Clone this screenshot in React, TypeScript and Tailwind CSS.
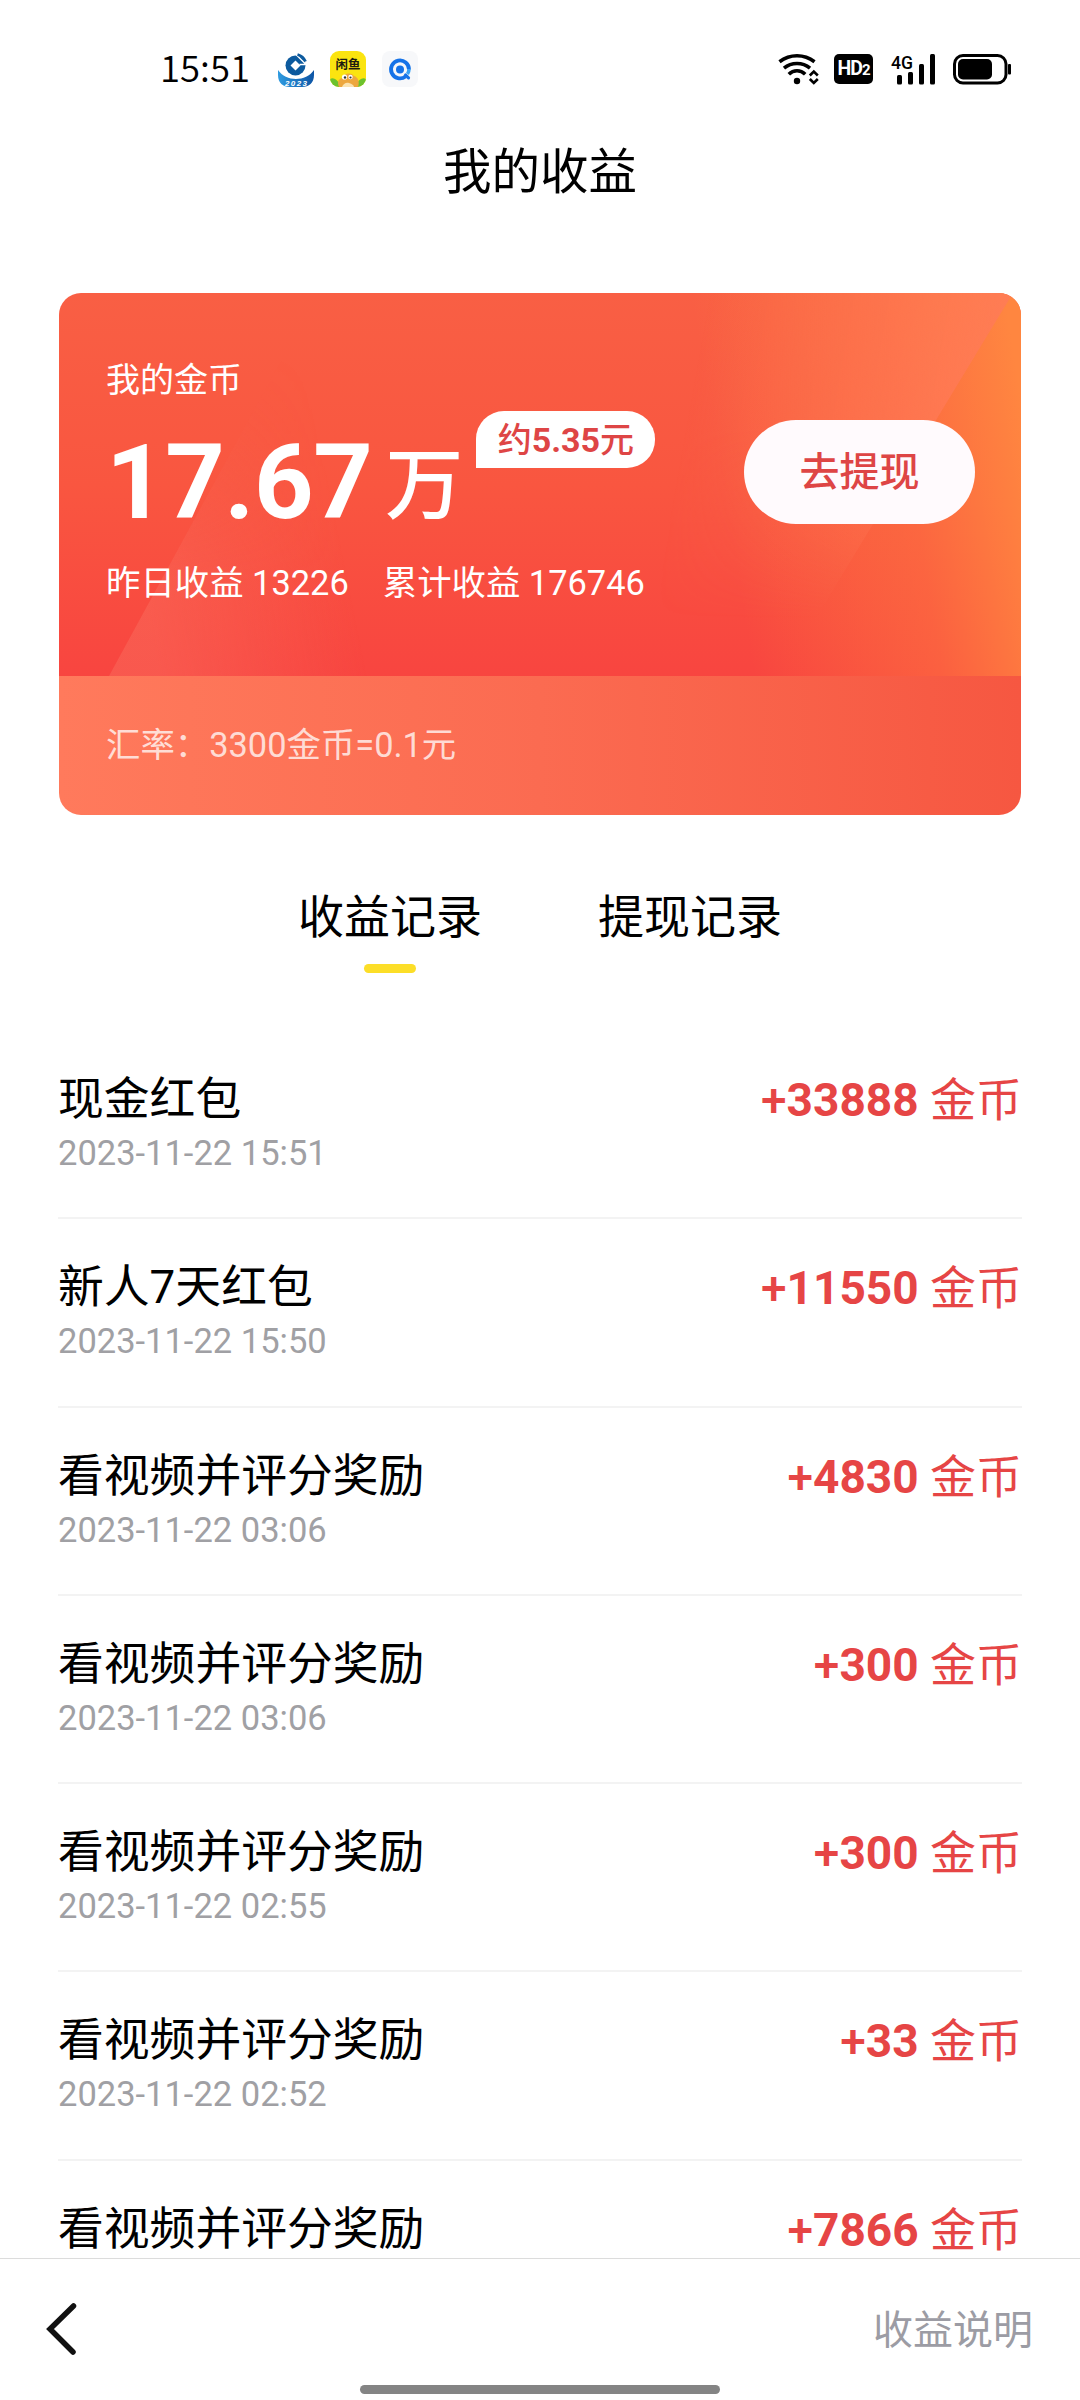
type EarningRecord = {
  title: string
  time?: string
  amount: string
}

const RECORDS: EarningRecord[] = [
  { title: '现金红包', time: '2023-11-22 15:51', amount: '33888' },
  { title: '新人7天红包', time: '2023-11-22 15:50', amount: '11550' },
  { title: '看视频并评分奖励', time: '2023-11-22 03:06', amount: '4830' },
  { title: '看视频并评分奖励', time: '2023-11-22 03:06', amount: '300' },
  { title: '看视频并评分奖励', time: '2023-11-22 02:55', amount: '300' },
  { title: '看视频并评分奖励', time: '2023-11-22 02:52', amount: '33' },
  { title: '看视频并评分奖励', amount: '7866' },
]

/** Blue bank badge with the year ribbon under it. */
function BankIcon() {
  return (
    <svg width="36" height="36" viewBox="0 0 36 36" aria-hidden="true">
      <defs>
        <linearGradient id="ribbon" x1="0" y1="0" x2="1" y2="0">
          <stop offset="0" stopColor="#2f9be0" />
          <stop offset="1" stopColor="#0d55a5" />
        </linearGradient>
      </defs>
      <path
        d="M0 19C4 25 11 28 18 28S32 25 36 19V24C36 32 31 36 24 36H12C5 36 0 32 0 24Z"
        fill="url(#ribbon)"
      />
      <circle cx="17.500" cy="14.500" r="10" fill="#0c5a9e" />
      <path d="M17.500 9.500l5 5-5 5-5-5z" fill="#fff" />
      <path d="M18 3.500L28.500 14M21.500 13.500H29" fill="none" stroke="#fff" strokeWidth="1.400" />
      <path d="M19.500 3.500C23 4.500 26 7 27.500 10.500" fill="none" stroke="#0c5a9e" strokeWidth="2.800" />
      <text x="18" y="34.500" textAnchor="middle" fontSize="8" fontWeight="700" fontStyle="italic" fill="#fff" textLength="22" fontFamily="Liberation Sans, sans-serif">
        2023
      </text>
    </svg>
  )
}

/** Yellow second-hand market app icon. */
function XianyuIcon() {
  return (
    <svg width="36" height="36" viewBox="0 0 36 36" aria-hidden="true">
      <defs>
        <clipPath id="xyClip">
          <rect width="36" height="36" rx="9" />
        </clipPath>
      </defs>
      <g clipPath="url(#xyClip)">
        <rect width="36" height="36" fill="#fbe410" />
        <path d="M0 28c4-2 7 1 9 4l1 4H0zM36 28c-4-2-7 1-9 4l-1 4h10z" fill="#6cc22e" />
        <path d="M9 36c-2-4-1-8 3-9 2-5 9-6 12-2 4 1 6 6 4 11z" fill="#eda73e" />
        <path d="M12 36c1-3 4-5 7-4s5 2 5 4z" fill="#fbe3b0" />
        <circle cx="14.500" cy="26" r="2.600" fill="#fff" />
        <circle cx="20.500" cy="26" r="2.200" fill="#fff" />
        <circle cx="15" cy="26.500" r="1.200" fill="#333" />
        <circle cx="20.500" cy="26.500" r="1.100" fill="#333" />
      </g>
      <text x="18" y="17.500" textAnchor="middle" fontSize="12.500" fontWeight="700" fill="#1c1c10" fontFamily="'Noto Sans CJK SC', sans-serif">
        闲鱼
      </text>
    </svg>
  )
}

function BrowserIcon() {
  return (
    <svg width="36" height="36" viewBox="0 0 36 36" aria-hidden="true">
      <rect width="36" height="36" rx="8" fill="#f7f8fa" />
      <path d="M23.500 25.500A9 9 0 1 1 27 18.500" fill="none" stroke="#1673e8" strokeWidth="3.800" />
      <path d="M27 18c0 2-.5 3.500-1.500 5" fill="none" stroke="#38a2f5" strokeWidth="3.500" />
      <path d="M23.500 24l3 2.800" stroke="#1673e8" strokeWidth="3.200" strokeLinecap="round" />
      <circle cx="18" cy="18.500" r="4" fill="#1673e8" />
    </svg>
  )
}

function WifiIcon() {
  return (
    <svg width="41" height="32" viewBox="0 0 41 32" aria-hidden="true">
      <g fill="none" stroke="#000" strokeWidth="3.600">
        <path d="M1.500 8.800C12 .8 26 .8 36.500 8.800" />
        <path d="M6 15.200C13.500 9 24.500 9 32 15.200" />
        <path d="M10.800 21.200C15.500 16.600 22.500 16.600 27.200 21.200" />
      </g>
      <circle cx="19" cy="28" r="3.200" fill="#000" />
      <path d="M31.800 22.500l4-4 4 4M31.800 26l4 4 4-4" fill="none" stroke="#000" strokeWidth="2.600" />
    </svg>
  )
}

function SignalIcon() {
  return (
    <svg className="overflow-visible" width="46" height="32" viewBox="0 0 46 32" aria-hidden="true">
      <text x="0" y="15.500" fontSize="19" fontWeight="500" textLength="22" lengthAdjust="spacingAndGlyphs" fontFamily="Roboto, sans-serif">
        4G
      </text>
      <g fill="#000">
        <rect x="6" y="22" width="5" height="9.500" rx="1.500" />
        <rect x="17" y="19" width="5" height="12.500" rx="1.500" />
        <rect x="28" y="11" width="5" height="20.500" rx="1.500" />
        <rect x="39" y="1" width="5" height="30.500" rx="1.500" />
      </g>
    </svg>
  )
}

function BatteryIcon() {
  return (
    <svg width="59" height="32" viewBox="0 0 59 32" aria-hidden="true">
      <rect x="1.500" y="2.500" width="51.500" height="27.500" rx="8.500" fill="none" stroke="#000" strokeWidth="3" />
      <rect x="5" y="6" width="34" height="20.500" rx="5" fill="#000" />
      <rect x="55" y="11" width="3" height="10.500" rx="1" fill="#000" />
    </svg>
  )
}

function StatusBar() {
  return (
    <div className="flex h-[138px] items-start justify-between pt-[51px] pr-[68px] pl-[160px]">
      <div className="flex h-9 items-center">
        <span className="w-[118px] pb-[5px] font-['Noto_Sans_CJK_SC',sans-serif] text-[36.5px] leading-9 font-[350]">
          15:51
        </span>
        <div className="flex gap-4">
          <BankIcon />
          <XianyuIcon />
          <BrowserIcon />
        </div>
      </div>
      <div className="flex h-9 items-center">
        <WifiIcon />
        <span className="ml-[15px] flex h-[30px] w-[39px] items-baseline justify-center rounded-[5px] bg-black text-[19.5px] leading-[30px] font-bold tracking-[-1px] text-white">
          HD<span className="text-[15px]">2</span>
        </span>
        <span className="ml-[18px]">
          <SignalIcon />
        </span>
        <span className="ml-[16px]">
          <BatteryIcon />
        </span>
      </div>
    </div>
  )
}

/** Red to orange sheen with two slanted facets behind the balance. */
function CardBackdrop() {
  return (
    <svg className="absolute inset-0" width="962" height="383" viewBox="0 0 962 383" aria-hidden="true">
      <defs>
        <linearGradient id="base" x1="0" y1="0" x2="0" y2="1">
          <stop offset="0" stopColor="#f95f44" />
          <stop offset="0.500" stopColor="#f95640" />
          <stop offset="1" stopColor="#f84540" />
        </linearGradient>
        <linearGradient id="glow" gradientUnits="userSpaceOnUse" x1="670" y1="230" x2="975" y2="180">
          <stop offset="0" stopColor="#ff8b3d" stopOpacity="0" />
          <stop offset="0.600" stopColor="#ff8040" stopOpacity="0.450" />
          <stop offset="1" stopColor="#ff8640" />
        </linearGradient>
        <linearGradient id="facetRight" gradientUnits="userSpaceOnUse" x1="640" y1="60" x2="920" y2="110">
          <stop offset="0" stopColor="#ff7a58" stopOpacity="0" />
          <stop offset="1" stopColor="#ff7a58" stopOpacity="0.800" />
        </linearGradient>
        <linearGradient id="facetFade" gradientUnits="userSpaceOnUse" x1="0" y1="0" x2="0" y2="383">
          <stop offset="0" stopColor="#fff" />
          <stop offset="0.350" stopColor="#fff" />
          <stop offset="0.850" stopColor="#000" />
        </linearGradient>
        <mask id="facetMask">
          <rect width="962" height="383" fill="url(#facetFade)" />
        </mask>
        <linearGradient id="facetLeft" gradientUnits="userSpaceOnUse" x1="90" y1="330" x2="290" y2="290">
          <stop offset="0" stopColor="#fa7060" stopOpacity="0.450" />
          <stop offset="1" stopColor="#fa7060" stopOpacity="0" />
        </linearGradient>
        <linearGradient id="facetRise" gradientUnits="userSpaceOnUse" x1="0" y1="60" x2="0" y2="383">
          <stop offset="0" stopColor="#000" />
          <stop offset="0.700" stopColor="#fff" />
        </linearGradient>
        <mask id="riseMask">
          <rect width="962" height="383" fill="url(#facetRise)" />
        </mask>
      </defs>
      <rect width="962" height="383" fill="url(#base)" />
      <rect width="962" height="383" fill="url(#glow)" />
      <path d="M500 0H954L722 383H500Z" fill="url(#facetRight)" mask="url(#facetMask)" />
      <path d="M50 383L226 60H320V383Z" fill="url(#facetLeft)" mask="url(#riseMask)" />
    </svg>
  )
}

function BalanceCard() {
  return (
    <section className="mx-[59px] mt-[85px] h-[522px] overflow-hidden rounded-[22px] text-white">
      <div className="relative h-[383px]">
        <CardBackdrop />
        <div className="relative flex h-full items-start justify-between pr-[46px] pl-[47px]">
          <div className="pt-[67px]">
            <p className="h-10 text-[34px] leading-10">我的金币</p>
            <div className="flex h-[120px] items-start">
              <span className="mt-[23px] text-[104px] leading-[120px] font-bold tracking-[-0.5px]">17.67</span>
              <span className="mt-[27px] ml-[13px] text-[78px] leading-[120px] font-medium">万</span>
              <span className="mt-[11px] ml-[13px] flex h-[57px] w-[179px] items-center justify-center rounded-[28px] rounded-bl-none bg-white pt-[2px] text-[34px] font-medium text-[#de4545]">
                约<b className="font-bold">5.35</b>元
              </span>
            </div>
            <p className="mt-[43px] flex gap-[34px] text-[34.4px] leading-10">
              <span>昨日收益 13226</span>
              <span>累计收益 176746</span>
            </p>
          </div>
          <button
            type="button"
            className="mt-[127px] h-[104px] w-[231px] rounded-full bg-[#fffafd] pt-[2px] text-[40px] font-medium text-[#de4545]"
          >
            去提现
          </button>
        </div>
      </div>
      <div className="flex h-[139px] items-center bg-linear-to-r from-[#ff7a5c] via-[#fb6b51] to-[#f65741] px-[47px] text-[34.4px] text-white/75">
        汇率：3300金币=0.1元
      </div>
    </section>
  )
}

function RecordRow({ record }: { record: EarningRecord }) {
  return (
    <li className="h-[188.25px] shrink-0 border-b-2 border-[#f3f3f3] pt-[38px]">
      <div className="flex h-[63px] items-center justify-between text-[46px]">
        <span className="text-[45.8px]">{record.title}</span>
        <span className="text-[#e64545]">
          <b className="font-bold">
            <span className="font-medium">+</span>
            {record.amount}
          </b>{' '}
          金币
        </span>
      </div>
      {record.time && <p className="text-[34.5px] leading-[42px] text-[#a0a0a4]">{record.time}</p>}
    </li>
  )
}

function App() {
  return (
    <div className="flex h-[2400px] w-[1080px] flex-col overflow-hidden bg-white font-[Roboto,'Noto_Sans_CJK_SC',sans-serif] text-black">
      <StatusBar />
      <h1 className="h-[70px] text-center text-[48.5px] leading-[69px]">我的收益</h1>
      <BalanceCard />

      <nav className="mt-[72px] flex justify-center gap-[116px] text-[46px] leading-[60px]">
        <button type="button" className="flex h-[86px] flex-col items-center justify-between">
          收益记录
          <span className="h-[9px] w-[52px] rounded-full bg-[#fcde28]" />
        </button>
        <button type="button" className="flex h-[60px] items-center">
          提现记录
        </button>
      </nav>

      <ul className="mx-[58px] mt-[58px] flex min-h-0 flex-1 flex-col overflow-hidden">
        {RECORDS.map((record, i) => (
          <RecordRow key={i} record={record} />
        ))}
      </ul>

      <footer className="flex h-[142px] shrink-0 flex-col justify-between border-t border-[#dcdcdc] bg-white pb-[6px]">
        <div className="flex h-[126px] items-start justify-between pr-[47px] pl-[46px]">
          <button type="button" aria-label="返回" className="mt-[43px]">
            <svg width="32" height="54" viewBox="0 0 32 54" fill="none" aria-hidden="true">
              <path d="M27.500 4L4 27L27 50" stroke="#111" strokeWidth="5.500" strokeLinecap="round" />
            </svg>
          </button>
          <button type="button" className="mt-[42px] text-[40px] leading-[60px] text-[#9c9ca4]">
            收益说明
          </button>
        </div>
        <span className="h-[9px] w-[360px] shrink-0 self-center rounded-full bg-[#848484]" />
      </footer>
    </div>
  )
}

export default App
